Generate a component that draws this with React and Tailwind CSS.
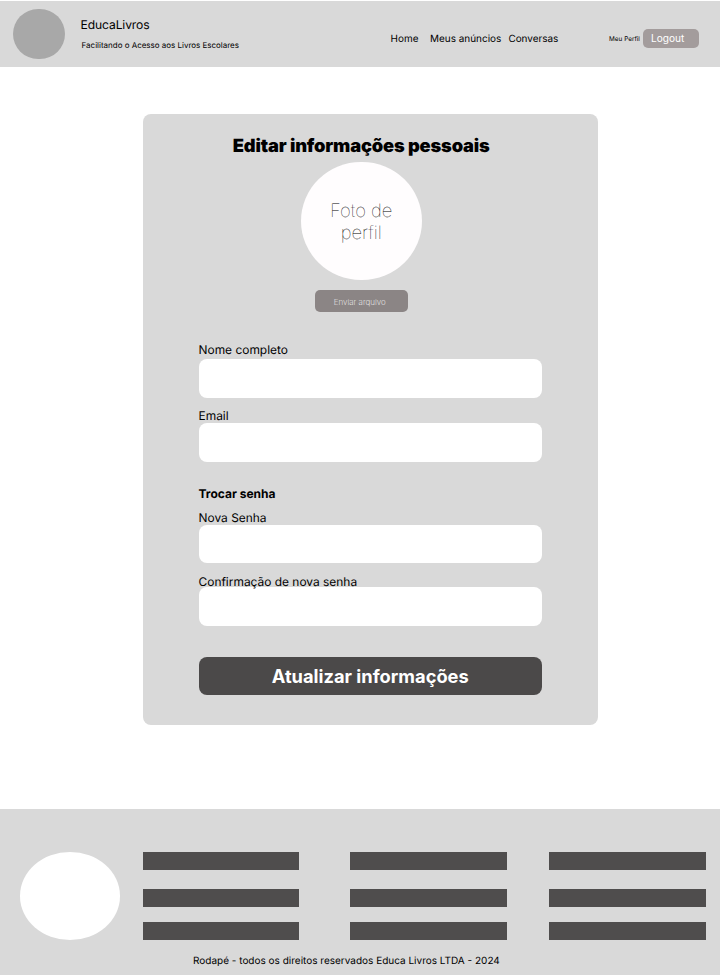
const links = [
  { label: 'Home', className: 'w-[39.5px]' },
  { label: 'Meus anúncios', className: 'w-[78.3px]' },
  { label: 'Conversas', className: '' },
];

function Header() {
  return (
    <header className="mt-px flex h-[66px] bg-[#d9d9d9]">
      <div className="mt-[8.3px] ml-[13.3px] h-[50px] w-[51.3px] shrink-0 rounded-full bg-[#a8a8a8]" />
      <div className="ml-[16px] w-[310px] shrink-0 pt-[16px]">
        <p className="text-[12.1px] leading-[16px] tracking-[-0.01em]">EducaLivros</p>
        <p className="mt-[6px] ml-px text-[7.97px] leading-[12px]">Facilitando o Acesso aos Livros Escolares</p>
      </div>
      <nav className="flex h-[20px] w-[218.5px] shrink-0 pt-[30px] text-[9.95px] leading-[16px]">
        {links.map((link) => (
          <a key={link.label} className={`shrink-0 whitespace-nowrap ${link.className}`}>
            {link.label}
          </a>
        ))}
      </nav>
      <a className="mt-[32px] w-[34px] shrink-0 text-[6.4px] leading-[12px] whitespace-nowrap">Meu Perfil</a>
      <button className="mt-[28px] flex h-[19px] w-[55.5px] shrink-0 items-center rounded-[5px] bg-[#a39c9c] pl-[8px] text-[10.1px] text-white">
        Logout
      </button>
    </header>
  );
}

function Field({ label, className, labelClassName }) {
  return (
    <label className={`block ${className}`}>
      <span className={`block text-[11.95px] leading-[16px] ${labelClassName}`}>{label}</span>
      <input className="block h-[38.5px] w-full rounded-[8px] bg-white px-3 text-xs outline-none" />
    </label>
  );
}

function ProfileCard() {
  return (
    <main className="mt-[47.4px] ml-[143px] h-[610.4px] w-[454.5px] rounded-[8px] bg-[#d9d9d9]">
      <section className="flex w-[436.5px] flex-col items-center pt-[20.6px]">
        <h1 className="text-[18.3px] leading-[22px] font-black tracking-[-0.0095em]">Editar informações pessoais</h1>
        <div className="mt-[5px] flex h-[118.5px] w-[120.5px] items-center justify-center rounded-[50%] bg-[#fffdfe] pt-[2px] text-center text-[18.5px] leading-[22px] font-thin">
          Foto de
          <br />
          perfil
        </div>
        <button className="mt-[9.5px] h-[22px] w-[93.5px] rounded-[5px] bg-[#8b8585] pt-[2px] pr-[3px] text-[8px] font-extralight text-white">
          Enviar arquivo
        </button>
      </section>
      <form className="ml-[55.5px] w-[343.5px] pt-[30.2px]">
        <Field label="Nome completo" className="" labelClassName="h-[17.2px]" />
        <Field label="Email" className="mt-[10.3px]" labelClassName="h-[15px]" />
        <h2 className="mt-[24px] text-[12px] leading-[16px] font-bold">Trocar senha</h2>
        <Field label="Nova Senha" className="mt-[8px]" labelClassName="h-[15px]" />
        <Field label="Confirmação de nova senha" className="mt-[10.5px]" labelClassName="h-[13.5px]" />
        <button className="mt-[31px] h-[38.5px] w-full rounded-[8px] bg-[#4b4949] pt-[1px] text-[18.3px] font-bold text-white">
          Atualizar informações
        </button>
      </form>
    </main>
  );
}

function FooterColumn({ className }) {
  return (
    <div className={`shrink-0 ${className}`}>
      <div className="h-[18px] bg-[#4f4d4d]" />
      <div className="mt-[19px] h-[18px] bg-[#4f4d4d]" />
      <div className="mt-[15px] h-[18px] bg-[#4f4d4d]" />
    </div>
  );
}

function Footer() {
  return (
    <footer className="mt-[83.9px] h-[166.4px] overflow-hidden bg-[#d9d9d9]">
      <div className="flex pt-[43.4px]">
        <div className="ml-[19.5px] h-[88px] w-[100.5px] shrink-0 rounded-[50%] bg-white" />
        <FooterColumn className="ml-[23px] w-[156px]" />
        <FooterColumn className="ml-[51px] w-[157px]" />
        <FooterColumn className="ml-[42px] w-[157px]" />
      </div>
      <p className="mt-[13px] ml-[193px] text-[10px] leading-[16px]">
        Rodapé - todos os direitos reservados Educa Livros LTDA - 2024
      </p>
    </footer>
  );
}

export default function App() {
  return (
    <div className="flex h-[975px] w-[720px] flex-col overflow-hidden bg-white font-['Inter',sans-serif] text-black [text-rendering:geometricPrecision]">
      <Header />
      <ProfileCard />
      <Footer />
    </div>
  );
}
